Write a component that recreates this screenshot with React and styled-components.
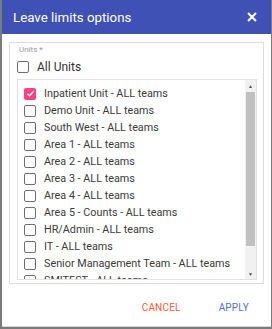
import React from "react";
import styled, { createGlobalStyle } from "styled-components";

const GlobalStyle = createGlobalStyle`
  body {
    margin: 0;
    background: #7b7b7b;
    font-family: Roboto, "Liberation Sans", sans-serif;
  }
`;

const units = [
  { name: "Inpatient Unit - ALL teams", checked: true },
  { name: "Demo Unit - ALL teams" },
  { name: "South West - ALL teams" },
  { name: "Area 1 - ALL teams" },
  { name: "Area 2 - ALL teams" },
  { name: "Area 3 - ALL teams" },
  { name: "Area 4 - ALL teams" },
  { name: "Area 5 - Counts - ALL teams" },
  { name: "HR/Admin - ALL teams" },
  { name: "IT - ALL teams" },
  { name: "Senior Management Team - ALL teams" },
  { name: "SMITEST - ALL teams" },
];

const Checkbox = ({ checked }) => (
  <Box checked={checked}>
    {checked && (
      <svg width="9" height="9" viewBox="0 0 10 10">
        <path d="M1.5 5.2 L4 7.5 L8.5 2.5" fill="none" stroke="#fff" strokeWidth="1.4" />
      </svg>
    )}
  </Box>
);

const App = () => {
  return (
    <>
      <GlobalStyle />
      <Dialog>
        <Header>
          <Title>Leave limits options</Title>
          <svg width="10" height="10" viewBox="0 0 10 10">
            <path d="M1 1 L9 9 M9 1 L1 9" stroke="#fff" strokeWidth="2" />
          </svg>
        </Header>
        <Body>
          <Fieldset>
            <Label>Units *</Label>
            <AllRow>
              <Checkbox />
              <span>All Units</span>
            </AllRow>
            <ListBox>
              <List>
                {units.map((u) => (
                  <Item key={u.name}>
                    <Checkbox checked={u.checked} />
                    <span>{u.name}</span>
                  </Item>
                ))}
              </List>
              <Scrollbar>
                <Arrow>▲</Arrow>
                <Track>
                  <Thumb />
                </Track>
                <Arrow>▼</Arrow>
              </Scrollbar>
            </ListBox>
          </Fieldset>
        </Body>
        <Footer>
          <Button color="#ff5a36">Cancel</Button>
          <Button color="#5c6bc0">Apply</Button>
        </Footer>
      </Dialog>
    </>
  );
};

export default App;

const Dialog = styled.div`
  margin: 0 1px 0 2px;
  width: 269px;
  height: 326px;
  background: #fff;
  display: flex;
  flex-direction: column;
  border-bottom: 1px solid #d6d6d6;
`;

const Header = styled.div`
  height: 34px;
  background: #3f51b5;
  display: flex;
  align-items: center;
  justify-content: space-between;
  padding: 0 14px 0 11px;
  flex-shrink: 0;
`;

const Title = styled.h3`
  margin: 0;
  font-weight: 400;
  font-size: 13.3px;
  color: #fff;
`;

const Body = styled.div`
  padding: 8px 7px 0 7px;
`;

const Fieldset = styled.div`
  border: 1px solid #dcdcdc;
  height: 238px;
  padding: 2px 6px 0 7px;
`;

const Label = styled.div`
  font-size: 8px;
  line-height: 10px;
  color: #9a9a9a;
  margin-left: 2px;
`;

const Box = styled.span`
  width: 12px;
  height: 12px;
  box-sizing: border-box;
  border-radius: 2px;
  border: ${(p) => (p.checked ? "none" : "1.5px solid #6e6e6e")};
  background: ${(p) => (p.checked ? "#ff4081" : "transparent")};
  display: inline-flex;
  align-items: center;
  justify-content: center;
  flex-shrink: 0;
`;

const AllRow = styled.div`
  height: 20px;
  display: flex;
  align-items: center;
  gap: 8px;
  font-size: 12px;
  color: #333;
  margin: 2px 0 0 0;
`;

const ListBox = styled.div`
  margin-top: 2px;
  border: 1px solid #e2e2e2;
  height: 199px;
  display: flex;
  overflow: hidden;
`;

const List = styled.div`
  flex: 1;
  padding: 5px 0 0 6px;
  overflow: hidden;
`;

const Item = styled.div`
  height: 17px;
  display: flex;
  align-items: center;
  gap: 8px;
  font-size: 10.8px;
  color: #3a3a3a;
  white-space: nowrap;
`;

const Scrollbar = styled.div`
  width: 11px;
  background: #f1f1f1;
  display: flex;
  flex-direction: column;
  align-items: center;
`;

const Arrow = styled.div`
  height: 11px;
  font-size: 5px;
  line-height: 13px;
  color: #505050;
`;

const Track = styled.div`
  flex: 1;
  width: 100%;
  padding: 1px 1px 0 1px;
  box-sizing: border-box;
`;

const Thumb = styled.div`
  height: 154px;
  background: #c1c1c1;
`;

const Footer = styled.div`
  flex: 1;
  display: flex;
  justify-content: flex-end;
  align-items: center;
  gap: 22px;
  padding: 4px 14px 0 0;
`;

const Button = styled.button`
  border: none;
  background: transparent;
  font-family: Roboto, "Liberation Sans", sans-serif;
  font-size: 10px;
  text-transform: uppercase;
  letter-spacing: 0.2px;
  color: ${(p) => p.color};
  padding: 6px 8px;
  cursor: pointer;
`;
